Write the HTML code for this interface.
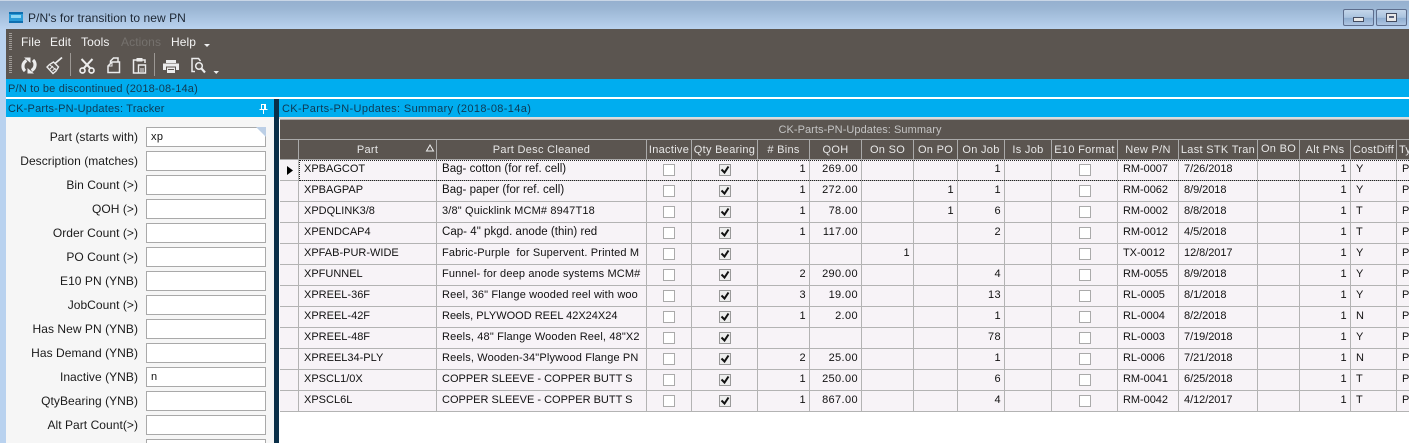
<!DOCTYPE html>
<html><head><meta charset="utf-8"><style>
html,body{margin:0;padding:0;width:1409px;height:443px;overflow:hidden;background:#fff}
body{position:relative;font:11px/13px "Liberation Sans",Arial,sans-serif;letter-spacing:.38px;color:#111}
.a{position:absolute}
.t{position:absolute;white-space:nowrap}
.m{position:absolute;white-space:nowrap;top:35px;font-size:12px;line-height:14px;letter-spacing:.1px;color:#f4f4f4}
.lb{position:absolute;left:6px;width:132px;text-align:right;height:14px;line-height:14px;white-space:nowrap;color:#1a1a1a;font-size:12px;letter-spacing:.05px}
.in{position:absolute;left:146px;width:118px;height:18px;background:#fff;border:1px solid #a9a9a9;line-height:18px;padding-left:0;text-indent:4px}
table{position:absolute;left:280px;top:140px;border-collapse:separate;border-spacing:0;table-layout:fixed;width:1161px}
td,th{box-sizing:border-box;height:21px;border-right:1px solid #b3b3b3;border-bottom:1px solid #b3b3b3;padding:0 4px 1px 5px;white-space:nowrap;overflow:hidden;font-weight:normal;background:#f7f3f7;line-height:13px;text-align:left}
th{height:20px;background:#5b5550;color:#e8e8e8;text-align:center;padding:1px 0 0;border-color:#aaa;letter-spacing:.3px}
td:nth-child(2){letter-spacing:0}
td:nth-child(3){font-size:11.5px;letter-spacing:.03px}
tr.u td:nth-child(3){font-size:11px;letter-spacing:0}
tr.q td:nth-child(3){font-size:11px;letter-spacing:.15px}
td:nth-child(13),td:nth-child(14){letter-spacing:-.05px}
td.r{text-align:right;padding-right:3px}
td.c{padding:4px 0 0;line-height:0;vertical-align:top}
.b{display:block;margin:0 auto;width:12px;height:12px;box-sizing:border-box;border:1px solid #aaa;background:#fff;position:relative}
.k{background:#eee;border-color:#999}
.k svg{position:absolute;left:0;top:0}
</style></head><body>
<!-- title bar -->
<div class="a" style="left:0;top:0;width:1409px;height:29px;background:linear-gradient(#95afce 0,#9ab5d3 8px,#a9c3e0 18px,#b9d2ef 29px)"></div>
<div class="a" style="left:0;top:0;width:1409px;height:1px;background:#c9d6e6"></div>
<svg class="a" style="left:8px;top:11px" width="16" height="13" viewBox="0 0 16 13"><rect x="1" y="1" width="14" height="11" fill="#2a9bd8"/><rect x="1" y="1" width="14" height="2" fill="#0f6fb0"/><rect x="3" y="4" width="10" height="3" fill="#8fd6f4"/><rect x="1" y="10" width="14" height="2" fill="#0f6fb0"/></svg>
<div class="t" style="left:28px;top:11px;font-size:12px;line-height:14px;letter-spacing:.05px;color:#1c2633">P/N's for transition to new PN</div>
<div class="a" style="left:1343px;top:9px;width:29px;height:15px;border:1px solid #5d6d8c;border-radius:2px;background:linear-gradient(#c4d6ea,#a9c2de 50%,#8fadd0 55%,#afc6e2)"></div>
<div class="a" style="left:1353px;top:17px;width:9px;height:3px;background:#e8e8e8;border:1px solid #444c60"></div>
<div class="a" style="left:1376px;top:9px;width:29px;height:15px;border:1px solid #5d6d8c;border-radius:2px;background:linear-gradient(#c4d6ea,#a9c2de 50%,#8fadd0 55%,#afc6e2)"></div>
<div class="a" style="left:1386px;top:13px;width:9px;height:7px;background:#e8e8e8;border:1px solid #444c60"></div>
<div class="a" style="left:1389px;top:16px;width:5px;height:2px;background:#555f78"></div>
<!-- left frame -->
<div class="a" style="left:0;top:29px;width:6px;height:414px;background:#b9d2ef"></div>
<!-- toolbars -->
<div class="a" style="left:6px;top:29px;width:1403px;height:50px;background:#5b5550"></div>
<div class="a" style="left:9px;top:33px;width:3px;height:17px;background:repeating-linear-gradient(#a09c98 0 1px,#5b5550 1px 2px)"></div>
<div class="a" style="left:9px;top:56px;width:3px;height:18px;background:repeating-linear-gradient(#a09c98 0 1px,#5b5550 1px 2px)"></div>
<div class="m" style="left:21px">File</div>
<div class="m" style="left:50px">Edit</div>
<div class="m" style="left:81px">Tools</div>
<div class="m" style="left:121px;color:#75716d">Actions</div>
<div class="m" style="left:171px">Help</div>
<svg class="a" style="left:204px;top:44px" width="7" height="4"><path d="M0 0h6l-3 3z" fill="#f0f0f0"/></svg>
<svg class="a" style="left:0;top:50px" width="225" height="29" viewBox="0 50 225 29" fill="none" stroke="#ececec">
<!-- refresh -->
<path d="M26.500 60.500a6.500 6.500 0 0 0-1.500 10.500" stroke-width="3.200"/>
<path d="M31.500 70.500a6.500 6.500 0 0 0 1.500-10.500" stroke-width="3.200"/>
<path d="M24 57.500h6.500v5.500zM34 73.500h-6.500v-5.500z" fill="#ececec" stroke="none"/>
<!-- broom -->
<path d="M55 63.500l7-6" stroke-width="1.800"/>
<path d="M53.500 62l5 5-2.500 4-3 2.500-6-6.500 2.500-2.500z" stroke-width="1.400"/>
<path d="M50 69l3-3M52.500 71l3-3M50 65l6 5" stroke-width="1"/>
<path d="M70.500 53v23M154.500 53v23" stroke="#9c9894"/>
<!-- scissors -->
<path d="M81.500 59l9 9.500M92.500 59l-9 9.500" stroke-width="2"/>
<circle cx="82.500" cy="70.500" r="2.500" stroke-width="1.700"/><circle cx="91.500" cy="70.500" r="2.500" stroke-width="1.700"/>
<!-- copy -->
<path d="M110.500 63v-2l3-3h4.500v4" stroke-width="1.500"/>
<path d="M108 66l4-4h7.500v10.500h-11.500z" stroke-width="1.500"/>
<path d="M108 66h4v-4" stroke-width="1"/>
<!-- paste -->
<path d="M137 60h-3.500v13h4.500M142 60h3v3" stroke-width="1.500"/>
<rect x="136.500" y="58" width="6" height="3.500" fill="#ececec" stroke="none"/>
<path d="M138.500 65h7v8h-7z" stroke-width="1.400"/><path d="M140 69h4M140 71h4" stroke-width="1"/>
<!-- print -->
<rect x="166" y="60" width="10" height="3" fill="#ececec" stroke="none"/>
<rect x="163" y="63.500" width="16" height="6.500" fill="#ececec" stroke="none"/>
<rect x="166" y="66.500" width="10" height="6.500" fill="#5b5550" stroke="none"/>
<rect x="167" y="67.500" width="8" height="5.500" fill="#ececec" stroke="none"/>
<rect x="168" y="69" width="6" height="1" fill="#5b5550" stroke="none"/>
<!-- preview -->
<path d="M195 71.500h-3v-13h6.500l2 2.500" stroke-width="1.500"/>
<circle cx="199" cy="66" r="3.300" stroke-width="1.500"/><path d="M201.500 68.500l3.500 4" stroke-width="2.200"/>
<path d="M213.500 71h5.500l-2.750 3z" fill="#ececec" stroke="none"/>
</svg>
<!-- blue bars -->
<div class="a" style="left:6px;top:79px;width:1403px;height:18px;background:#00adef"></div>
<div class="t" style="left:8px;top:83px;color:#123a52;letter-spacing:.18px">P/N to be discontinued (2018-08-14a)</div>
<div class="a" style="left:6px;top:99px;width:268px;height:18px;background:#00adef"></div>
<div class="t" style="left:8px;top:103px;color:#0d3a55;letter-spacing:.2px">CK-Parts-PN-Updates: Tracker</div>
<svg class="a" style="left:259px;top:104px" width="9" height="10" viewBox="0 0 9 10" fill="none" stroke="#fff"><path d="M2.500.5h4v5h-4zM.5 5.500h8M4.500 6v4M5.500 1v4"/></svg>
<div class="a" style="left:274px;top:99px;width:5px;height:344px;background:#0a2f48"></div>
<div class="a" style="left:279px;top:99px;width:1130px;height:18px;background:#00adef"></div>
<div class="t" style="left:282px;top:103px;color:#0d3a55;letter-spacing:.36px">CK-Parts-PN-Updates: Summary (2018-08-14a)</div>
<!-- left panel -->
<div class="a" style="left:6px;top:117px;width:268px;height:326px;background:#f6f6f6"></div>
<div class="lb" style="top:130px">Part (starts with)</div><div class="in" style="top:127px">xp</div>
<svg class="a" style="left:256px;top:127px" width="10" height="10"><path d="M0 0h10v10z" fill="#bccfe6"/></svg>
<div class="lb" style="top:154px">Description (matches)</div><div class="in" style="top:151px"></div>
<div class="lb" style="top:178px">Bin Count (&gt;)</div><div class="in" style="top:175px"></div>
<div class="lb" style="top:202px">QOH (&gt;)</div><div class="in" style="top:199px"></div>
<div class="lb" style="top:226px">Order Count (&gt;)</div><div class="in" style="top:223px"></div>
<div class="lb" style="top:250px">PO Count (&gt;)</div><div class="in" style="top:247px"></div>
<div class="lb" style="top:274px">E10 PN (YNB)</div><div class="in" style="top:271px"></div>
<div class="lb" style="top:298px">JobCount (&gt;)</div><div class="in" style="top:295px"></div>
<div class="lb" style="top:322px">Has New PN (YNB)</div><div class="in" style="top:319px"></div>
<div class="lb" style="top:346px">Has Demand (YNB)</div><div class="in" style="top:343px"></div>
<div class="lb" style="top:370px">Inactive (YNB)</div><div class="in" style="top:367px">n</div>
<div class="lb" style="top:394px">QtyBearing (YNB)</div><div class="in" style="top:391px"></div>
<div class="lb" style="top:418px">Alt Part Count(&gt;)</div><div class="in" style="top:415px"></div>
<div class="in" style="top:439px"></div>
<!-- grid -->
<div class="a" style="left:279px;top:117px;width:1130px;height:2px;background:#dcdcdc"></div>
<div class="a" style="left:280px;top:119px;width:1129px;height:21px;background:#5b5550;border-top:1px solid #aaa;border-bottom:1px solid #aaa;box-sizing:border-box"></div>
<div class="t" style="left:280px;width:1160px;text-align:center;top:124px;color:#c4c4c4;letter-spacing:.06px">CK-Parts-PN-Updates: Summary</div>
<table>
<colgroup><col style="width:19px"><col style="width:138px"><col style="width:210px"><col style="width:45px"><col style="width:66px"><col style="width:52px"><col style="width:52px"><col style="width:52px"><col style="width:44px"><col style="width:47px"><col style="width:47px"><col style="width:66px"><col style="width:61px"><col style="width:79px"><col style="width:42px"><col style="width:51px"><col style="width:46px"><col style="width:44px"></colgroup>
<tr><th></th><th>Part</th><th>Part Desc Cleaned</th><th>Inactive</th><th>Qty Bearing</th><th># Bins</th><th>QOH</th><th>On SO</th><th>On PO</th><th>On Job</th><th>Is Job</th><th>E10 Format</th><th>New P/N</th><th>Last STK Tran</th><th style="padding-bottom:2px">On BO</th><th>Alt PNs</th><th>CostDiff</th><th style="text-align:left;padding-left:2px">Type</th></tr>
<tr><td></td><td>XPBAGCOT</td><td>Bag- cotton (for ref. cell)</td><td class="c"><i class="b"></i></td><td class="c"><i class="b k"><svg width="10" height="10"><path d="M1.500 4.500l3 3 4-6" fill="none" stroke="#111" stroke-width="2"/></svg></i></td><td class="r">1</td><td class="r">269.00</td><td class="r"></td><td class="r"></td><td class="r">1</td><td></td><td class="c"><i class="b"></i></td><td>RM-0007</td><td>7/26/2018</td><td></td><td class="r">1</td><td>Y</td><td>P</td></tr>
<tr><td></td><td>XPBAGPAP</td><td>Bag- paper (for ref. cell)</td><td class="c"><i class="b"></i></td><td class="c"><i class="b k"><svg width="10" height="10"><path d="M1.500 4.500l3 3 4-6" fill="none" stroke="#111" stroke-width="2"/></svg></i></td><td class="r">1</td><td class="r">272.00</td><td class="r"></td><td class="r">1</td><td class="r">1</td><td></td><td class="c"><i class="b"></i></td><td>RM-0062</td><td>8/9/2018</td><td></td><td class="r">1</td><td>Y</td><td>P</td></tr>
<tr class="q"><td></td><td>XPDQLINK3/8</td><td>3/8" Quicklink MCM# 8947T18</td><td class="c"><i class="b"></i></td><td class="c"><i class="b k"><svg width="10" height="10"><path d="M1.500 4.500l3 3 4-6" fill="none" stroke="#111" stroke-width="2"/></svg></i></td><td class="r">1</td><td class="r">78.00</td><td class="r"></td><td class="r">1</td><td class="r">6</td><td></td><td class="c"><i class="b"></i></td><td>RM-0002</td><td>8/8/2018</td><td></td><td class="r">1</td><td>T</td><td>P</td></tr>
<tr><td></td><td>XPENDCAP4</td><td>Cap- 4" pkgd. anode (thin) red</td><td class="c"><i class="b"></i></td><td class="c"><i class="b k"><svg width="10" height="10"><path d="M1.500 4.500l3 3 4-6" fill="none" stroke="#111" stroke-width="2"/></svg></i></td><td class="r">1</td><td class="r">117.00</td><td class="r"></td><td class="r"></td><td class="r">2</td><td></td><td class="c"><i class="b"></i></td><td>RM-0012</td><td>4/5/2018</td><td></td><td class="r">1</td><td>T</td><td>P</td></tr>
<tr class="q"><td></td><td>XPFAB-PUR-WIDE</td><td>Fabric-Purple &nbsp;for Supervent. Printed M</td><td class="c"><i class="b"></i></td><td class="c"><i class="b k"><svg width="10" height="10"><path d="M1.500 4.500l3 3 4-6" fill="none" stroke="#111" stroke-width="2"/></svg></i></td><td class="r"></td><td class="r"></td><td class="r">1</td><td class="r"></td><td class="r"></td><td></td><td class="c"><i class="b"></i></td><td>TX-0012</td><td>12/8/2017</td><td></td><td class="r">1</td><td>Y</td><td>P</td></tr>
<tr class="q"><td></td><td>XPFUNNEL</td><td>Funnel- for deep anode systems MCM#</td><td class="c"><i class="b"></i></td><td class="c"><i class="b k"><svg width="10" height="10"><path d="M1.500 4.500l3 3 4-6" fill="none" stroke="#111" stroke-width="2"/></svg></i></td><td class="r">2</td><td class="r">290.00</td><td class="r"></td><td class="r"></td><td class="r">4</td><td></td><td class="c"><i class="b"></i></td><td>RM-0055</td><td>8/9/2018</td><td></td><td class="r">1</td><td>Y</td><td>P</td></tr>
<tr class="q"><td></td><td>XPREEL-36F</td><td>Reel, 36" Flange wooded reel with woo</td><td class="c"><i class="b"></i></td><td class="c"><i class="b k"><svg width="10" height="10"><path d="M1.500 4.500l3 3 4-6" fill="none" stroke="#111" stroke-width="2"/></svg></i></td><td class="r">3</td><td class="r">19.00</td><td class="r"></td><td class="r"></td><td class="r">13</td><td></td><td class="c"><i class="b"></i></td><td>RL-0005</td><td>8/1/2018</td><td></td><td class="r">1</td><td>Y</td><td>P</td></tr>
<tr class="u"><td></td><td>XPREEL-42F</td><td>Reels, PLYWOOD REEL 42X24X24</td><td class="c"><i class="b"></i></td><td class="c"><i class="b k"><svg width="10" height="10"><path d="M1.500 4.500l3 3 4-6" fill="none" stroke="#111" stroke-width="2"/></svg></i></td><td class="r">1</td><td class="r">2.00</td><td class="r"></td><td class="r"></td><td class="r">1</td><td></td><td class="c"><i class="b"></i></td><td>RL-0004</td><td>8/2/2018</td><td></td><td class="r">1</td><td>N</td><td>P</td></tr>
<tr class="q"><td></td><td>XPREEL-48F</td><td>Reels, 48" Flange Wooden Reel, 48"X2</td><td class="c"><i class="b"></i></td><td class="c"><i class="b k"><svg width="10" height="10"><path d="M1.500 4.500l3 3 4-6" fill="none" stroke="#111" stroke-width="2"/></svg></i></td><td class="r"></td><td class="r"></td><td class="r"></td><td class="r"></td><td class="r">78</td><td></td><td class="c"><i class="b"></i></td><td>RL-0003</td><td>7/19/2018</td><td></td><td class="r">1</td><td>Y</td><td>P</td></tr>
<tr class="q"><td></td><td>XPREEL34-PLY</td><td>Reels, Wooden-34"Plywood Flange PN</td><td class="c"><i class="b"></i></td><td class="c"><i class="b k"><svg width="10" height="10"><path d="M1.500 4.500l3 3 4-6" fill="none" stroke="#111" stroke-width="2"/></svg></i></td><td class="r">2</td><td class="r">25.00</td><td class="r"></td><td class="r"></td><td class="r">1</td><td></td><td class="c"><i class="b"></i></td><td>RL-0006</td><td>7/21/2018</td><td></td><td class="r">1</td><td>N</td><td>P</td></tr>
<tr class="u"><td></td><td>XPSCL1/0X</td><td>COPPER SLEEVE - COPPER BUTT S</td><td class="c"><i class="b"></i></td><td class="c"><i class="b k"><svg width="10" height="10"><path d="M1.500 4.500l3 3 4-6" fill="none" stroke="#111" stroke-width="2"/></svg></i></td><td class="r">1</td><td class="r">250.00</td><td class="r"></td><td class="r"></td><td class="r">6</td><td></td><td class="c"><i class="b"></i></td><td>RM-0041</td><td>6/25/2018</td><td></td><td class="r">1</td><td>T</td><td>P</td></tr>
<tr class="u"><td></td><td>XPSCL6L</td><td>COPPER SLEEVE - COPPER BUTT S</td><td class="c"><i class="b"></i></td><td class="c"><i class="b k"><svg width="10" height="10"><path d="M1.500 4.500l3 3 4-6" fill="none" stroke="#111" stroke-width="2"/></svg></i></td><td class="r">1</td><td class="r">867.00</td><td class="r"></td><td class="r"></td><td class="r">4</td><td></td><td class="c"><i class="b"></i></td><td>RM-0042</td><td>4/12/2017</td><td></td><td class="r">1</td><td>T</td><td>P</td></tr>
</table>
<div class="a" style="left:299px;top:160px;width:1110px;height:0;border-top:1px dotted #222"></div>
<div class="a" style="left:299px;top:180px;width:1110px;height:0;border-top:1px dotted #222"></div>
<div class="a" style="left:299px;top:160px;width:0;height:21px;border-left:1px dotted #222"></div>
<svg class="a" style="left:286px;top:165px" width="8" height="11"><path d="M1 1l6 4.500-6 4.500z" fill="#000"/></svg>
<svg class="a" style="left:425px;top:144px" width="10" height="8"><path d="M5 1l3.500 6h-7z" fill="none" stroke="#eee"/></svg>
</body></html>
